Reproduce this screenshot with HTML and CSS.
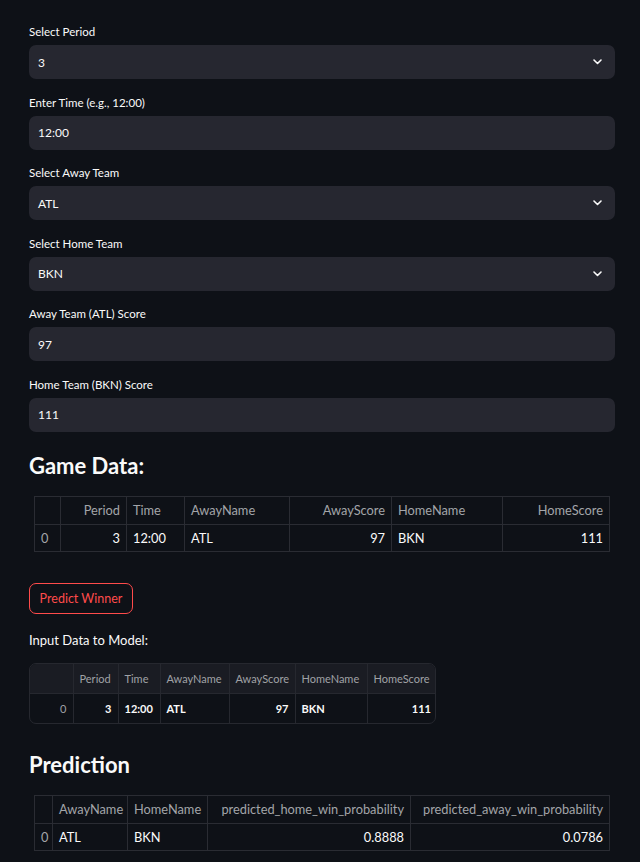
FILE: index.html
```html
<!DOCTYPE html>
<html>
<head>
<meta charset="utf-8">
<link rel="stylesheet" href="styles.css">
</head>
<body>
<div class="main">
  <div class="inputs">
    <div class="widget">
      <div class="label">Select Period</div>
      <div class="box select"><span>3</span><svg class="chev" width="9" height="6" viewBox="0 0 9 6"><path d="M1 1 L4.5 4.5 L8 1" fill="none" stroke="#fafafa" stroke-width="1.6" stroke-linecap="round" stroke-linejoin="round"/></svg></div>
    </div>
    <div class="widget">
      <div class="label">Enter Time (e.g., 12:00)</div>
      <div class="box"><span>12:00</span></div>
    </div>
    <div class="widget">
      <div class="label">Select Away Team</div>
      <div class="box select"><span>ATL</span><svg class="chev" width="9" height="6" viewBox="0 0 9 6"><path d="M1 1 L4.5 4.5 L8 1" fill="none" stroke="#fafafa" stroke-width="1.6" stroke-linecap="round" stroke-linejoin="round"/></svg></div>
    </div>
    <div class="widget">
      <div class="label">Select Home Team</div>
      <div class="box select"><span>BKN</span><svg class="chev" width="9" height="6" viewBox="0 0 9 6"><path d="M1 1 L4.5 4.5 L8 1" fill="none" stroke="#fafafa" stroke-width="1.6" stroke-linecap="round" stroke-linejoin="round"/></svg></div>
    </div>
    <div class="widget">
      <div class="label">Away Team (ATL) Score</div>
      <div class="box"><span>97</span></div>
    </div>
    <div class="widget">
      <div class="label">Home Team (BKN) Score</div>
      <div class="box"><span>111</span></div>
    </div>
  </div>

  <h3 class="heading h-game">Game Data:</h3>
  <table class="stable t1">
    <colgroup><col style="width:26px"><col style="width:66px"><col style="width:58px"><col style="width:105px"><col style="width:102px"><col style="width:111px"><col style="width:107px"></colgroup>
    <thead><tr><th></th><th class="r">Period</th><th>Time</th><th>AwayName</th><th class="r">AwayScore</th><th>HomeName</th><th class="r">HomeScore</th></tr></thead>
    <tbody><tr><td class="idx">0</td><td class="r">3</td><td>12:00</td><td>ATL</td><td class="r">97</td><td>BKN</td><td class="r">111</td></tr></tbody>
  </table>

  <button class="btn">Predict Winner</button>

  <p class="text">Input Data to Model:</p>
  <div class="grid">
    <table class="dgrid">
      <colgroup><col style="width:43px"><col style="width:45px"><col style="width:42px"><col style="width:69px"><col style="width:66px"><col style="width:72px"><col style="width:70px"></colgroup>
      <thead><tr><th></th><th>Period</th><th>Time</th><th>AwayName</th><th>AwayScore</th><th>HomeName</th><th>HomeScore</th></tr></thead>
      <tbody><tr><td class="r idx">0</td><td class="r">3</td><td>12:00</td><td>ATL</td><td class="r">97</td><td>BKN</td><td class="r">111</td></tr></tbody>
    </table>
  </div>

  <h3 class="heading h-pred">Prediction</h3>
  <table class="stable t3">
    <colgroup><col style="width:18px"><col style="width:75px"><col style="width:80px"><col style="width:203px"><col style="width:199px"></colgroup>
    <thead><tr><th></th><th>AwayName</th><th>HomeName</th><th class="r">predicted_home_win_probability</th><th class="r">predicted_away_win_probability</th></tr></thead>
    <tbody><tr><td class="idx">0</td><td>ATL</td><td>BKN</td><td class="r">0.8888</td><td class="r">0.0786</td></tr></tbody>
  </table>
</div>
</body>
</html>
```

FILE: styles.css
```css
html, body {
  margin: 0;
  padding: 0;
  background: #0e1117;
  color: #fafafa;
  font-family: Lato, "Liberation Sans", sans-serif;
}

.main {
  width: 586px;
  padding: 21px 0 0 29px;
  display: flex;
  flex-direction: column;
  align-items: flex-start;
}

.inputs {
  width: 586px;
  display: flex;
  flex-direction: column;
  gap: 12.6px;
}

.widget {
  display: flex;
  flex-direction: column;
}

.label {
  font-size: 11.5px;
  line-height: 21px;
  height: 21px;
  margin-bottom: 3px;
  color: #fafafa;
}

.box {
  height: 34px;
  background: #262730;
  border-radius: 7px;
  display: flex;
  align-items: center;
  justify-content: space-between;
  padding: 0 13px 0 9px;
  font-size: 12px;
  box-sizing: border-box;
}

.chev {
  display: block;
}

.heading {
  margin: 0;
  font-weight: 700;
  font-size: 22px;
  line-height: 26px;
  color: #fafafa;
}

.h-game {
  margin-top: 21px;
}

.h-pred {
  margin-top: 28px;
}

.stable {
  margin-left: 5px;
  margin-top: 17px;
  width: 575px;
  table-layout: fixed;
  border-collapse: collapse;
  font-size: 12.8px;
}

.stable th, .stable td {
  border: 1px solid #2a2c33;
  padding: 0 6px;
  text-align: left;
  white-space: nowrap;
  overflow: hidden;
}

.stable th {
  font-weight: 400;
  color: #a3a5a9;
  height: 27px;
}

.stable td {
  height: 26px;
  color: #fafafa;
}

.stable .idx {
  color: #a3a5a9;
}

.r {
  text-align: right !important;
}

.btn {
  margin-top: 31px;
  width: 104px;
  height: 31px;
  border: 1px solid #ff4b4b;
  border-radius: 7px;
  background: #0e1117;
  color: #ff4b4b;
  font-family: Lato, "Liberation Sans", sans-serif;
  font-size: 12.5px;
  padding: 0;
}

.text {
  margin: 16px 0 0 0;
  font-size: 13px;
  line-height: 20px;
}

.grid {
  margin-top: 13px;
  width: 407px;
  border: 1px solid #26282f;
  border-radius: 7px;
  overflow: hidden;
  box-sizing: border-box;
}

.dgrid {
  width: 405px;
  table-layout: fixed;
  border-collapse: collapse;
  font-size: 11px;
}

.dgrid th, .dgrid td {
  padding: 0 6px;
  text-align: left;
  white-space: nowrap;
  overflow: hidden;
  border-left: 1px solid #26282f;
}

.dgrid th:first-child, .dgrid td:first-child {
  border-left: none;
}

.dgrid th {
  background: #1a1c23;
  color: #a0a2a6;
  font-weight: 400;
  height: 29px;
  border-bottom: 1px solid #26282f;
}

.dgrid td {
  height: 29px;
  font-weight: 700;
  color: #fafafa;
}

.dgrid .idx {
  color: #a0a2a6;
  font-weight: 400;
}

.t3 {
  margin-top: 17px;
}
```
